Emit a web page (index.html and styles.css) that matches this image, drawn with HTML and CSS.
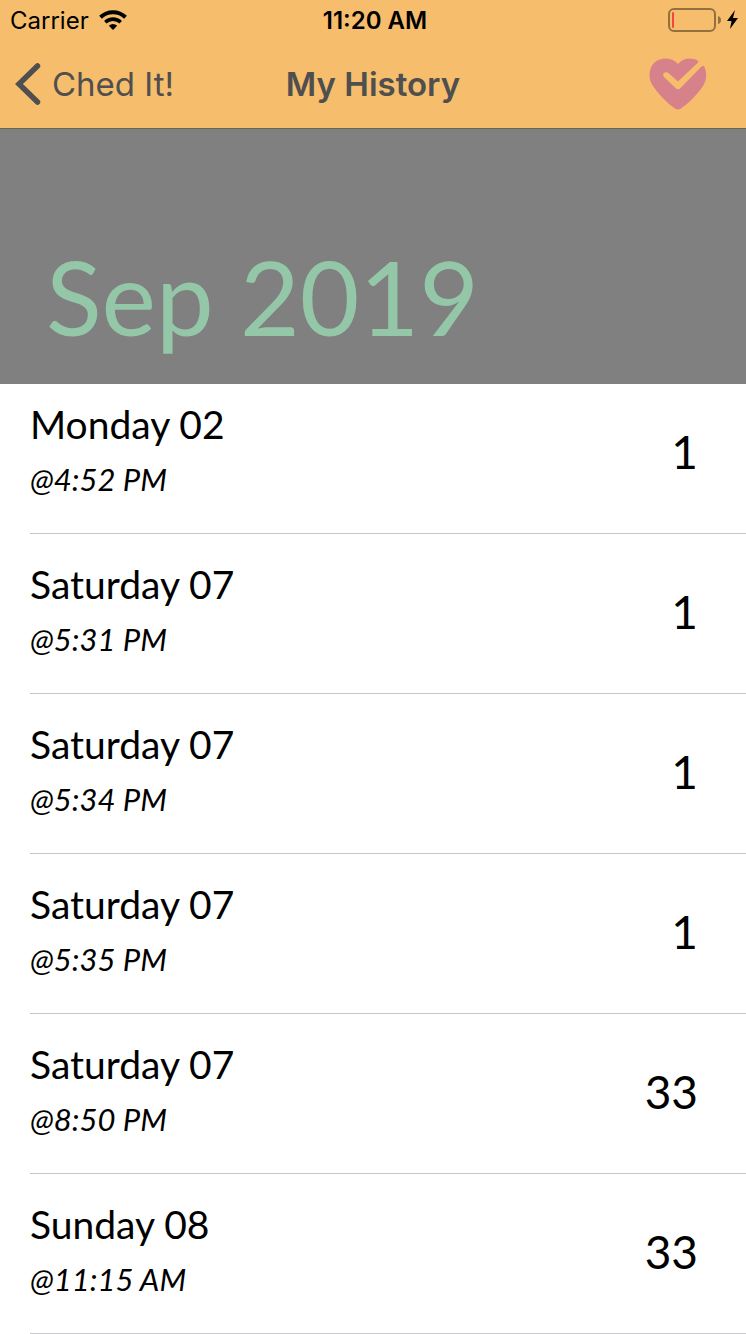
FILE: index.html
```html
<!DOCTYPE html>
<html lang="en">
<head>
<meta charset="utf-8">
<meta name="viewport" content="width=device-width, initial-scale=1">
<title>My History</title>
<link rel="stylesheet" href="styles.css">
</head>
<body>
<header class="top">
  <div class="status">
    <div class="status-left">
      <span>Carrier</span>
      <svg class="wifi" viewBox="0 0 28 20" width="28" height="20" aria-hidden="true">
        <path d="M1.500 7.200a18 18 0 0 1 25 0" fill="none" stroke="#000" stroke-width="4"/>
        <path d="M6.300 12.200a11.200 11.200 0 0 1 15.400 0" fill="none" stroke="#000" stroke-width="3.600"/>
        <path d="M14 20l-4.200-4.300a6.200 6.200 0 0 1 8.400 0z"/>
      </svg>
    </div>
    <span class="clock">11:20 AM</span>
    <div class="status-right">
      <svg viewBox="0 0 72 24" width="72" height="24" aria-hidden="true">
        <rect x="1" y="1" width="46" height="22" rx="5" fill="none" stroke="#92703f" stroke-width="2"/>
        <path d="M50 8q3 1 3 4t-3 4z" fill="#92703f"/>
        <rect x="4" y="4" width="2" height="16" rx="1" fill="#f5473c"/>
        <path d="M67 2L59 13h4.500L62 21l8-11h-5z"/>
      </svg>
    </div>
  </div>
  <nav class="nav">
    <a class="back" href="#">
      <svg viewBox="0 0 26 42" width="26" height="42" aria-hidden="true"><path d="M22.500 3L4 21l18.500 18" fill="none" stroke="#4f4f4f" stroke-width="5.500" stroke-linecap="round" stroke-linejoin="miter"/></svg>
      <span>Ched It!</span>
    </a>
    <h1 class="title">My History</h1>
    <button class="heart" type="button" aria-label="Favourites">
      <svg viewBox="0 0 58 52" width="58" height="52" aria-hidden="true">
        <path d="M29 6C23-1 12-1 6 4C-1 10-1 21 4 28C10 37 18 45 26 50.500Q29 52.500 32 50.500C40 45 48 37 54 28C58 22 58 15 55.500 9C55 7.500 53.500 7.500 52 9L31 30.500Q29 32 27 30.500L15 19Q13 16 15.500 14.500Q18 13.500 20 15.500L29 23.500L48.500 5Q50 3.500 49 3C43-1 34 0 29 6Z" fill="#d7828b"/>
      </svg>
    </button>
  </nav>
</header>
<main>
  <h2 class="month">Sep 2019</h2>
  <ul class="list">
    <li class="row"><div><p class="day">Monday 02</p><p class="time">@4:52 PM</p></div><span class="count">1</span></li>
    <li class="row"><div><p class="day">Saturday 07</p><p class="time">@5:31 PM</p></div><span class="count">1</span></li>
    <li class="row"><div><p class="day">Saturday 07</p><p class="time">@5:34 PM</p></div><span class="count">1</span></li>
    <li class="row"><div><p class="day">Saturday 07</p><p class="time">@5:35 PM</p></div><span class="count">1</span></li>
    <li class="row"><div><p class="day">Saturday 07</p><p class="time">@8:50 PM</p></div><span class="count">33</span></li>
    <li class="row"><div><p class="day">Sunday 08</p><p class="time">@11:15 AM</p></div><span class="count">33</span></li>
  </ul>
</main>
</body>
</html>
```
FILE: styles.css
```css
* { box-sizing: border-box; }
body, h1, h2, p, ul { margin: 0; padding: 0; }
body { background: #fff; color: #000; font-family: Lato, sans-serif; }

.top {
  background: #f6be6c;
  border-bottom: 1px solid #6b6355;
  font-family: Inter, sans-serif;
}
.status, .nav {
  display: grid;
  grid-template-columns: 1fr auto 1fr;
  align-items: center;
}
.status { height: 40px; padding: 0 6px 0 10px; font-size: 24px; }
.status-left { display: flex; align-items: center; gap: 10px; }
.clock { font-weight: 600; }
.status-right { display: flex; justify-content: flex-end; }
.status-right svg, .wifi { display: block; }

.nav { height: 88px; padding: 0 15px; color: #4f4f4f; font-size: 33px; }
.back { display: flex; align-items: center; gap: 11px; color: inherit; text-decoration: none; }
.title { font-size: 33px; font-weight: 600; }
.heart { justify-self: end; margin-right: 24px; padding: 0; border: 0; background: none; }
.heart svg { display: block; }

.month {
  padding: 108px 46px 28px;
  background: #808080;
  color: #93c7a8;
  font-size: 103px;
  font-weight: 400;
  line-height: 119px;
}

.list { list-style: none; padding-left: 30px; }
.row {
  display: flex;
  justify-content: space-between;
  align-items: center;
  padding: 23px 48px 26px 0;
  border-bottom: 1px solid #c8c7cc;
}
.row:first-child { padding-top: 13px; }
.day { font-size: 39px; line-height: 54px; }
.time { font-size: 31px; line-height: 56px; font-style: italic; }
.count { font-size: 46px; line-height: 60px; }
```
